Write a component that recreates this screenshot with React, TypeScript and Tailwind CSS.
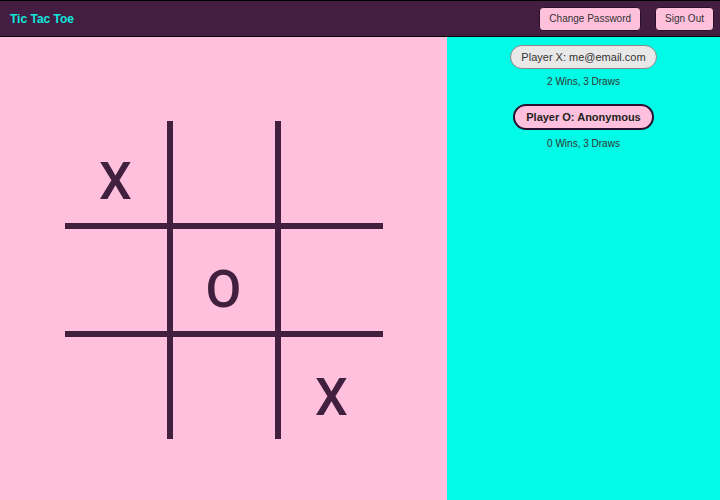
const board = ["X", "", "", "", "O", "", "", "", "X"];

const players = [
  { label: "Player X: me@email.com", stats: "2 Wins, 3 Draws", active: false },
  { label: "Player O: Anonymous", stats: "0 Wins, 3 Draws", active: true },
];

export default function App() {
  return (
    <div className="flex h-[500px] w-[720px] flex-col overflow-hidden font-['Liberation_Sans',Arial,sans-serif]">
      <nav className="flex h-[37px] shrink-0 items-center justify-between border-y border-black bg-[#431e42] pl-[10px] pr-[6px]">
        <span className="text-[12px] font-bold text-[#10e8dc]">Tic Tac Toe</span>
        <div className="flex items-center gap-[14px]">
          <button className="h-[24px] rounded-[4px] border border-[#2a1028] bg-[#ffc0dc] px-[9px] text-[10px] text-[#333]">
            Change Password
          </button>
          <button className="h-[24px] rounded-[4px] border border-[#2a1028] bg-[#ffc0dc] px-[9px] text-[10px] text-[#333]">
            Sign Out
          </button>
        </div>
      </nav>

      <div className="flex flex-1">
        <main className="flex w-[447px] justify-center bg-[#ffc0dd] pt-[84px]">
          <div className="grid h-fit grid-cols-[102px_102px_102px] grid-rows-[102px_102px_102px] gap-[6px] bg-[#40203e]">
            {board.map((cell, i) => (
              <div
                key={i}
                className="flex items-center justify-center bg-[#ffc0dd] pt-[20px] font-['Roboto',sans-serif] text-[52px] font-medium leading-none text-[#40203e]"
              >
                {cell}
              </div>
            ))}
          </div>
        </main>

        <aside className="flex flex-1 flex-col items-center bg-[#00fbe6] pt-[8px]">
          {players.map((p) => (
            <div key={p.label} className="mb-[16px] flex flex-col items-center">
              <div
                className={
                  p.active
                    ? "flex h-[26px] items-center rounded-full border-2 border-[#2a1030] bg-[#ffc0dd] px-[11px] text-[11px] font-bold text-[#222]"
                    : "flex h-[24px] items-center rounded-full border border-[#888] bg-[#e8e8e8] px-[10px] text-[11px] text-[#333]"
                }
              >
                {p.label}
              </div>
              <p className={p.active ? "mt-[8px] text-[10px] leading-[12px] text-[#333]" : "mt-[7px] text-[10px] leading-[12px] text-[#333]"}>
                {p.stats}
              </p>
            </div>
          ))}
        </aside>
      </div>
    </div>
  );
}
